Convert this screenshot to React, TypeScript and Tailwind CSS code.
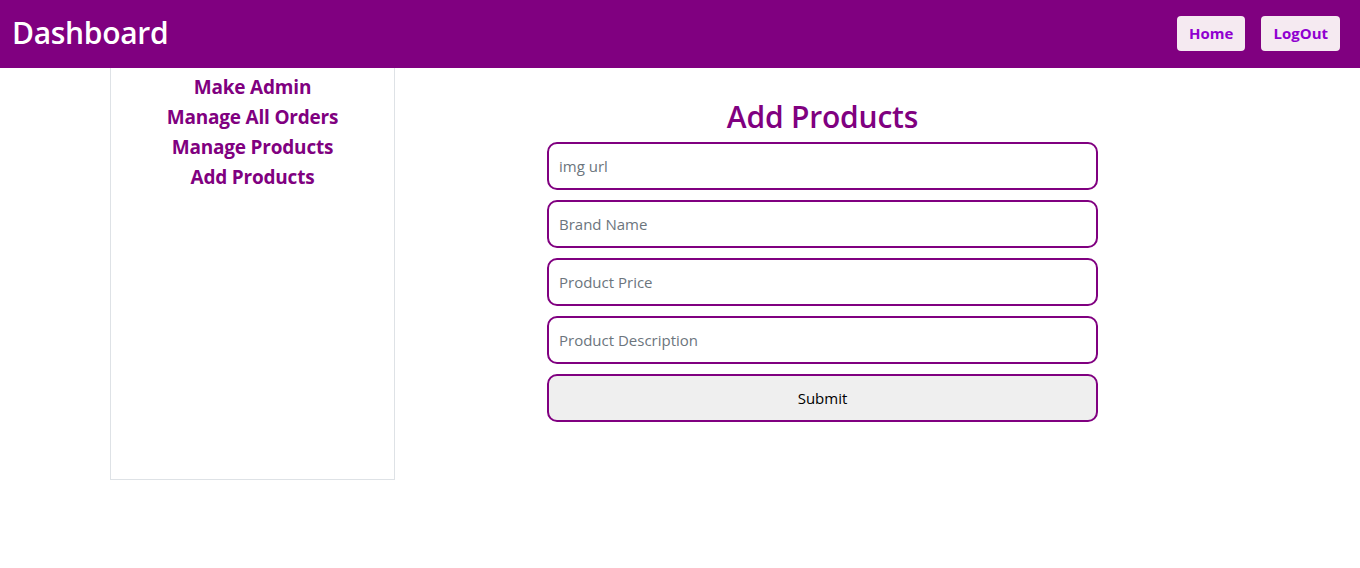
import React from "react";

export default function App() {
  const font = { fontFamily: '"Open Sans", "Noto Sans", sans-serif' };
  return (
    <div className="min-h-[568px] bg-white" style={font}>
      <header className="h-[68px] bg-[#800080] flex items-center justify-between pl-[12px] pr-[20px]">
        <h1 className="text-white text-[30px] font-semibold leading-none tracking-[-0.3px] pb-[3px]">Dashboard</h1>
        <div className="flex gap-[16px] pb-[1px]">
          <button className="h-[35px] px-[12px] rounded-[4px] bg-[#f5eaf1] text-[#9000d0] text-[15px] font-bold">Home</button>
          <button className="h-[35px] px-[12px] rounded-[4px] bg-[#f5eaf1] text-[#9000d0] text-[15px] font-bold">LogOut</button>
        </div>
      </header>
      <div className="flex px-[110px]">
        <aside className="w-[285px] h-[412px] border border-t-0 border-[#dee2e6] flex flex-col items-center pt-[4px]">
          {["Make Admin", "Manage All Orders", "Manage Products", "Add Products"].map((t) => (
            <a key={t} className="text-[#800080] text-[19px] font-bold leading-[30px] tracking-[-0.2px]">{t}</a>
          ))}
        </aside>
        <main className="flex-1 flex flex-col items-center pt-[28px]">
          <h2 className="text-[#800080] text-[30px] font-semibold leading-[42px] mb-[4px] tracking-[-0.2px]">Add Products</h2>
          <form className="w-[551px] flex flex-col gap-[10px]">
            {["img url", "Brand Name", "Product Price", "Product Description"].map((p) => (
              <input
                key={p}
                placeholder={p}
                className="h-[48px] w-full border-2 border-[#800080] rounded-[10px] px-[10px] text-[15px] placeholder:text-[#6c757d] outline-none"
              />
            ))}
            <button type="button" className="h-[48px] w-full border-2 border-[#800080] rounded-[10px] bg-[#efefef] text-[15px] text-black">Submit</button>
          </form>
        </main>
      </div>
    </div>
  );
}
